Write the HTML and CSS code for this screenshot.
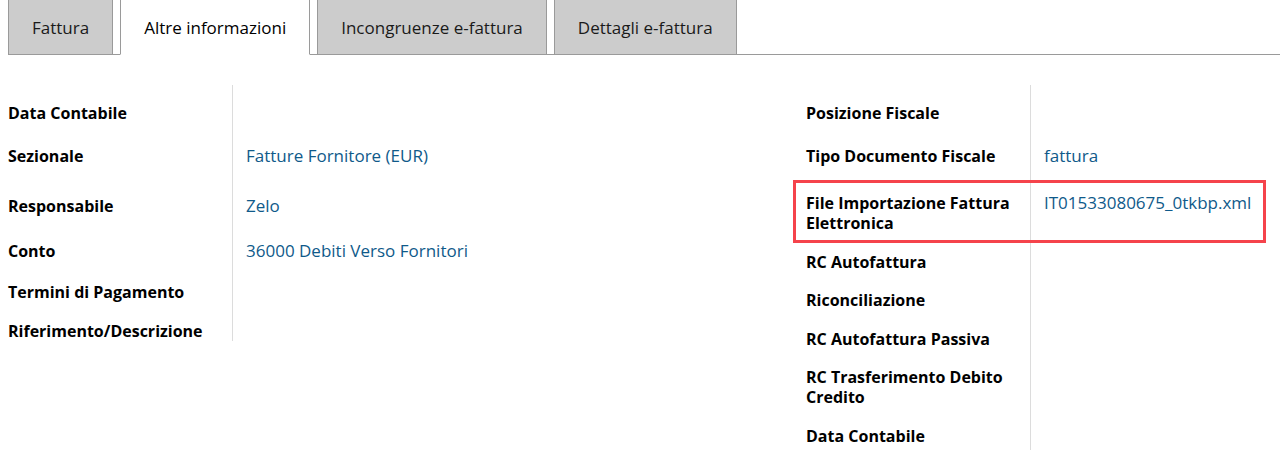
FILE: index.html
```html
<!DOCTYPE html>
<html lang="it">
<head>
<meta charset="utf-8">
<title>Altre informazioni</title>
<link rel="stylesheet" href="styles.css">
</head>
<body>
  <nav class="tabs">
    <div class="tab">Fattura</div>
    <div class="gap"></div>
    <div class="tab active">Altre informazioni</div>
    <div class="gap"></div>
    <div class="tab">Incongruenze e-fattura</div>
    <div class="gap"></div>
    <div class="tab">Dettagli e-fattura</div>
    <div class="rest"></div>
  </nav>

  <main class="sheet">
    <section class="group left">
      <div class="row r43"><div class="label">Data Contabile</div><div class="value"></div></div>
      <div class="row r50"><div class="label">Sezionale</div><div class="value link">Fatture Fornitore (EUR)</div></div>
      <div class="row r45"><div class="label">Responsabile</div><div class="value link">Zelo</div></div>
      <div class="row r41"><div class="label">Conto</div><div class="value link">36000 Debiti Verso Fornitori</div></div>
      <div class="row r39"><div class="label">Termini di Pagamento</div><div class="value"></div></div>
      <div class="row r28"><div class="label">Riferimento/Descrizione</div><div class="value"></div></div>
    </section>

    <section class="group right">
      <div class="row r43"><div class="label">Posizione Fiscale</div><div class="value"></div></div>
      <div class="row r47"><div class="label">Tipo Documento Fiscale</div><div class="value link">fattura</div></div>
      <div class="row r59 marked"><div class="label">File Importazione Fattura Elettronica</div><div class="value link">IT01533080675_0tkbp.xml</div></div>
      <div class="row r38"><div class="label">RC Autofattura</div><div class="value"></div></div>
      <div class="row r39"><div class="label">Riconciliazione</div><div class="value"></div></div>
      <div class="row r38"><div class="label">RC Autofattura Passiva</div><div class="value"></div></div>
      <div class="row r59"><div class="label">RC Trasferimento Debito Credito</div><div class="value"></div></div>
      <div class="row r32"><div class="label">Data Contabile</div><div class="value"></div></div>
    </section>
  </main>
</body>
</html>
```

FILE: styles.css
```css
html, body {
  margin: 0;
  padding: 0;
  background: #ffffff;
}

body {
  font-family: "Open Sans", "Noto Sans", sans-serif;
  font-size: 16px;
  line-height: 20px;
  color: #000000;
  width: 1280px;
  height: 460px;
  overflow: hidden;
}

/* ---------- tabs ---------- */
.tabs {
  display: flex;
  height: 55px;
  padding-left: 8px;
  box-sizing: border-box;
  font-size: 17px;
}

.tab {
  display: flex;
  align-items: center;
  padding: 1px 23px 0 23px;
  background: #cccccc;
  color: #1a1a1a;
  border-left: 1px solid #9a9a9a;
  border-right: 1px solid #9a9a9a;
  border-bottom: 1px solid #9a9a9a;
  white-space: nowrap;
}

.tab.active {
  background: #ffffff;
  border-bottom-color: #ffffff;
  color: #000000;
}

.gap {
  width: 7px;
  border-bottom: 1px solid #9a9a9a;
}

.rest {
  flex: 1;
  border-bottom: 1px solid #9a9a9a;
}

/* ---------- sheet ---------- */
.sheet {
  display: grid;
  grid-template-columns: 798px 1fr;
  padding: 30px 8px 0 8px;
}

.group {
  display: flex;
  flex-direction: column;
}

.row {
  display: grid;
  grid-template-columns: 224px 1fr;
  position: relative;
}

.row > div { box-sizing: border-box; }

.label {
  font-weight: 700;
  padding-top: 18px;
}

.row + .row .label {
  padding-top: 8px;
}

.value {
  border-left: 1px solid #dcdcdc;
  padding: 18px 0 0 13px;
  font-size: 17px;
}

.row + .row .value {
  padding-top: 8px;
}

.link {
  color: #0f5a8a;
}

.r28 { height: 28px; }
.r32 { height: 32px; }
.r38 { height: 38px; }
.r39 { height: 39px; }
.r41 { height: 41px; }
.r43 { height: 53px; }
.r45 { height: 45px; }
.r47 { height: 47px; }
.r50 { height: 50px; }
.r59 { height: 59px; }

/* highlight annotation drawn over the row */
.marked::after {
  content: "";
  position: absolute;
  top: -5px;
  left: -13px;
  width: 473px;
  height: 63px;
  box-sizing: border-box;
  border: 3px solid #f5434b;
  pointer-events: none;
}
```
